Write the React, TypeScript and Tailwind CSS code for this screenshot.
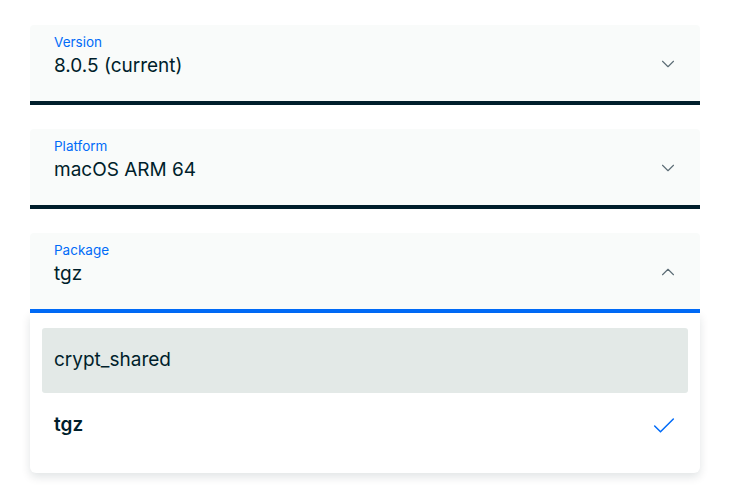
import { ChevronDown, ChevronUp, Check } from 'lucide-react'

const font = { fontFamily: 'Inter, Lato, sans-serif' }

function Field({ label, value, open }: { label: string; value: string; open?: boolean }) {
  return (
    <div
      className={`flex h-[80px] items-start justify-between rounded-t-[4px] bg-[#f9fbfa] pl-6 pr-[21px] pt-[9px] border-b-4 ${
        open ? 'border-[#016bf8]' : 'border-[#001e2b]'
      }`}
    >
      <div className="flex flex-col">
        <span className="text-[13.5px] leading-[16px] text-[#016bf8]">{label}</span>
        <span className="mt-[4px] text-[19px] leading-[24px] text-[#001e2b]">{value}</span>
      </div>
      <div className="mt-[19px] text-[#5c6c75]">
        {open ? (
          <ChevronUp className="h-[22px] w-[22px]" strokeWidth={1.2} />
        ) : (
          <ChevronDown className="h-[22px] w-[22px]" strokeWidth={1.2} />
        )}
      </div>
    </div>
  )
}

export default function App() {
  return (
    <div className="min-h-screen bg-white pl-[30px] pr-[54px] pt-[25px]" style={font}>
      <div className="flex w-[670px] flex-col gap-6">
        <Field label="Version" value="8.0.5 (current)" />
        <Field label="Platform" value="macOS ARM 64" />
        <div>
          <Field label="Package" value="tgz" open />
          <div className="rounded-b-[6px] bg-white px-3 py-[15px] shadow-[0_4px_10px_rgba(0,30,43,0.12)]">
            <div className="flex h-[65px] items-center rounded-[3px] bg-[#e3e9e7] px-3 text-[19px] text-[#001e2b]">
              crypt_shared
            </div>
            <div className="flex h-[65px] items-center justify-between px-3 text-[19px] font-semibold text-[#001e2b]">
              <span>tgz</span>
              <Check className="-mr-[2px] h-7 w-7 text-[#016bf8]" strokeWidth={1.3} />
            </div>
          </div>
        </div>
      </div>
    </div>
  )
}
